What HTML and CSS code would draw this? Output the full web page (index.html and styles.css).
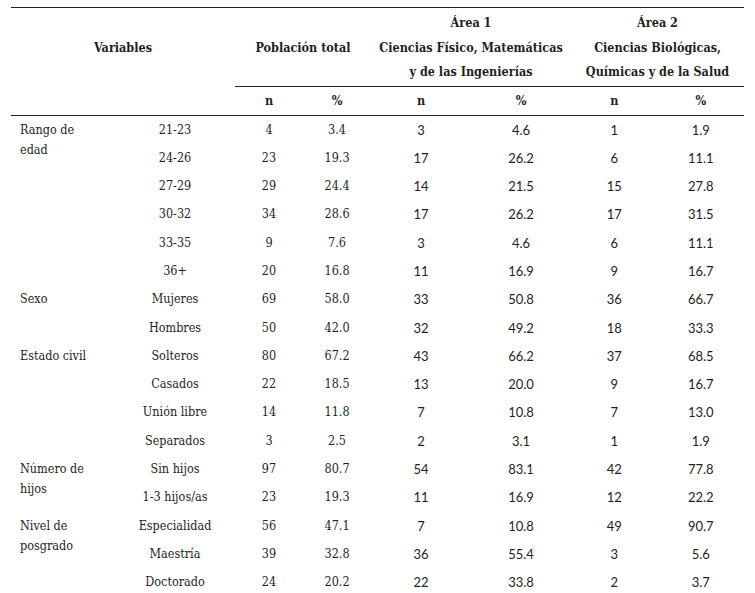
FILE: index.html
```html
<!DOCTYPE html>
<html lang="es">
<head>
<meta charset="utf-8">
<link rel="stylesheet" href="styles.css">
</head>
<body>
<table class="tbl">
  <colgroup>
    <col class="c-cat"><col class="c-sub">
    <col class="c-p"><col class="c-p">
    <col class="c-a1"><col class="c-a1">
    <col class="c-a2"><col class="c-a2">
  </colgroup>
  <thead>
    <tr class="h1">
      <th colspan="2" class="hvar">Variables</th>
      <th colspan="2" class="hgrp">Población total</th>
      <th colspan="2" class="hgrp">Área 1<br>Ciencias Físico, Matemáticas<br>y de las Ingenierías</th>
      <th colspan="2" class="hgrp">Área 2<br>Ciencias Biológicas,<br>Químicas y de la Salud</th>
    </tr>
    <tr class="h2">
      <th colspan="2"></th>
      <th>n</th><th>%</th><th>n</th><th>%</th><th>n</th><th>%</th>
    </tr>
  </thead>
  <tbody>
    <tr><td class="cat" rowspan="6">Rango de edad</td><td>21-23</td><td>4</td><td>3.4</td><td class="s">3</td><td class="s">4.6</td><td class="s">1</td><td class="s">1.9</td></tr>
    <tr><td>24-26</td><td>23</td><td>19.3</td><td class="s">17</td><td class="s">26.2</td><td class="s">6</td><td class="s">11.1</td></tr>
    <tr><td>27-29</td><td>29</td><td>24.4</td><td class="s">14</td><td class="s">21.5</td><td class="s">15</td><td class="s">27.8</td></tr>
    <tr><td>30-32</td><td>34</td><td>28.6</td><td class="s">17</td><td class="s">26.2</td><td class="s">17</td><td class="s">31.5</td></tr>
    <tr><td>33-35</td><td>9</td><td>7.6</td><td class="s">3</td><td class="s">4.6</td><td class="s">6</td><td class="s">11.1</td></tr>
    <tr><td>36+</td><td>20</td><td>16.8</td><td class="s">11</td><td class="s">16.9</td><td class="s">9</td><td class="s">16.7</td></tr>
    <tr><td class="cat" rowspan="2">Sexo</td><td>Mujeres</td><td>69</td><td>58.0</td><td class="s">33</td><td class="s">50.8</td><td class="s">36</td><td class="s">66.7</td></tr>
    <tr><td>Hombres</td><td>50</td><td>42.0</td><td class="s">32</td><td class="s">49.2</td><td class="s">18</td><td class="s">33.3</td></tr>
    <tr><td class="cat" rowspan="4">Estado civil</td><td>Solteros</td><td>80</td><td>67.2</td><td class="s">43</td><td class="s">66.2</td><td class="s">37</td><td class="s">68.5</td></tr>
    <tr><td>Casados</td><td>22</td><td>18.5</td><td class="s">13</td><td class="s">20.0</td><td class="s">9</td><td class="s">16.7</td></tr>
    <tr><td>Unión libre</td><td>14</td><td>11.8</td><td class="s">7</td><td class="s">10.8</td><td class="s">7</td><td class="s">13.0</td></tr>
    <tr><td>Separados</td><td>3</td><td>2.5</td><td class="s">2</td><td class="s">3.1</td><td class="s">1</td><td class="s">1.9</td></tr>
    <tr><td class="cat" rowspan="2">Número de hijos</td><td>Sin hijos</td><td>97</td><td>80.7</td><td class="s">54</td><td class="s">83.1</td><td class="s">42</td><td class="s">77.8</td></tr>
    <tr><td>1-3 hijos/as</td><td>23</td><td>19.3</td><td class="s">11</td><td class="s">16.9</td><td class="s">12</td><td class="s">22.2</td></tr>
    <tr><td class="cat" rowspan="3">Nivel de posgrado</td><td>Especialidad</td><td>56</td><td>47.1</td><td class="s">7</td><td class="s">10.8</td><td class="s">49</td><td class="s">90.7</td></tr>
    <tr><td>Maestría</td><td>39</td><td>32.8</td><td class="s">36</td><td class="s">55.4</td><td class="s">3</td><td class="s">5.6</td></tr>
    <tr><td>Doctorado</td><td>24</td><td>20.2</td><td class="s">22</td><td class="s">33.8</td><td class="s">2</td><td class="s">3.7</td></tr>
  </tbody>
</table>
</body>
</html>
```
FILE: styles.css
```css
html, body {
  margin: 0;
  padding: 0;
  background: #ffffff;
}
body {
  padding: 7px 0 0 11px;
  font-family: "DejaVu Serif", "Liberation Serif", serif;
  font-stretch: condensed;
  font-size: 12.5px;
  color: #231f20;
}
.tbl {
  border-collapse: collapse;
  table-layout: fixed;
  width: 733px;
  border-top: 1.5px solid #222;
}
.c-cat { width: 104px; }
.c-sub { width: 120px; }
.c-p { width: 68px; }
.c-a1 { width: 100px; }
.c-a2 { width: 86.5px; }
th {
  font-weight: bold;
  text-align: center;
  padding: 0;
}
.h1 th {
  line-height: 24.5px;
  padding: 3px 0 1px;
  vertical-align: middle;
}
.hgrp {
  border-bottom: 1.5px solid #222;
}
.h2 th {
  height: 28px;
  border-bottom: 1.5px solid #222;
  vertical-align: middle;
}
td {
  text-align: center;
  vertical-align: top;
  padding: 4px 0;
  line-height: 20.3px;
  white-space: nowrap;
}
td.cat {
  text-align: left;
  padding-left: 9px;
  padding-right: 14px;
  white-space: normal;
}
td.s {
  font-family: Lato, "Noto Sans", sans-serif;
  font-stretch: normal;
  font-size: 13px;
}
```
